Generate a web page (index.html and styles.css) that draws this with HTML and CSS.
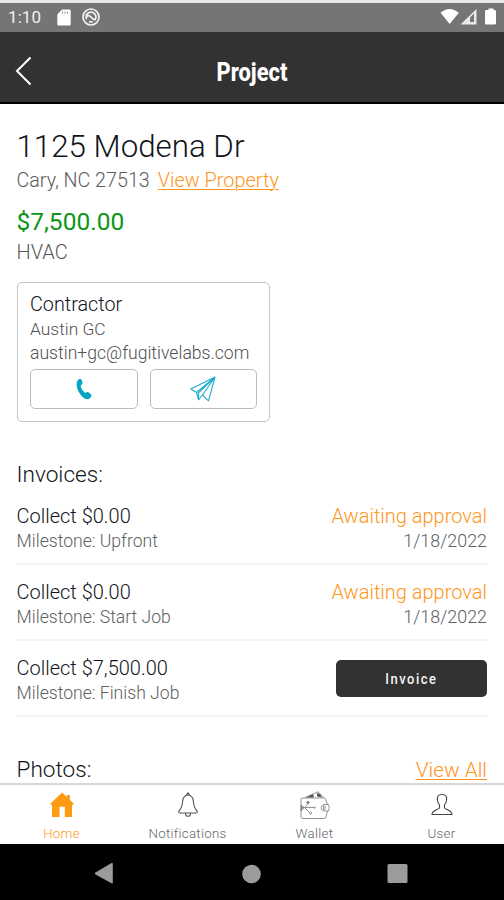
FILE: index.html
```html
<!DOCTYPE html>
<html lang="en">
<head>
<meta charset="utf-8">
<title>Project</title>
<link rel="stylesheet" href="styles.css">
</head>
<body>
<div class="status">
  <span class="clock">1:10</span>
  <svg class="sd" width="14" height="17" viewBox="0 0 14 17"><path d="M5 .5h7.500a1.200 1.200 0 0 1 1.200 1.200v13.600a1.200 1.200 0 0 1-1.200 1.200h-11A1.200 1.200 0 0 1 .3 15.300V5.500z" fill="#fff"/><path d="M5.500 2.500v2.300M8 2.500v2.300M10.500 2.500v2.300" stroke="#999" stroke-width="1"/></svg>
  <svg class="ring" width="18" height="18" viewBox="0 0 18 18" fill="none" stroke="#f2f2f2"><circle cx="9" cy="9" r="8" stroke-width="1.700"/><path d="M4.700 11.200A4.800 4.800 0 1 1 12.600 12.200M4.500 8.500q2.500-2 4.500.5t4.500 3M7 13.500q2 .8 3.500 0" stroke-width="1.700"/></svg>
  <svg class="signals" width="56" height="18" viewBox="0 0 56 18"><path d="M.5 4.800Q9.500-2.800 18.800 4.800L9.700 16z" fill="#fff"/><path d="M36.500 1v15.500h-16z" fill="#e9e9e9"/><path d="M30 9.500l4-4v8.500h-4z" fill="#777"/><path d="M46.500 2h2V.5h5V2h1.200q1.300 0 1.300 1.300v11.900q0 1.300-1.300 1.300h-8.400Q45 16.500 45 15.200V3.300Q45 2 46.500 2z" fill="#fff"/></svg>
</div>
<header class="header">
  <svg class="back" width="18" height="30" viewBox="0 0 18 30"><path d="M15.500 1.500 2 15l13.500 13.500" fill="none" stroke="#fff" stroke-width="2"/></svg>
  <h1 class="title">Project</h1>
</header>
<main class="content">
  <h2 class="address">1125 Modena Dr</h2>
  <p class="city"><span class="place">Cary, NC 27513</span><a class="link property">View Property</a></p>
  <p class="price">$7,500.00</p>
  <p class="trade">HVAC</p>
  <section class="card">
    <h3 class="role">Contractor</h3>
    <p class="name">Austin GC</p>
    <p class="email">austin+gc@fugitivelabs.com</p>
    <div class="actions">
      <span class="action"><svg width="16" height="22" viewBox="0 0 16 22"><path d="M1 3.500Q2.500.5 4.700.9 6.500 2.500 6.500 4.800 6.300 6.800 4.600 7.500 5.300 12 9.500 15q1.500-1.400 3.200-.6 2.300 1 2.800 3.300-.7 2.900-3.500 3.500Q8 21.300 4.800 17 .2 11 .6 5.500z" fill="#03a5c5"/></svg></span>
      <span class="action"><svg width="26" height="26" viewBox="0 0 26 26" fill="none" stroke="#20acc9" stroke-width="1.100" stroke-linejoin="round"><path d="M25 1 .8 13l5.700 3.500zM25 1 18.500 24.800l-6-5.800zM25 1 8.500 16.800v7l4-4.800M6.500 16.500l2 7.300M25 1 12.500 19"/></svg></span>
    </div>
  </section>
  <h3 class="heading">Invoices:</h3>
  <div class="invoice">
    <div><p class="amount">Collect $0.00</p><p class="detail">Milestone: Upfront</p></div>
    <div class="right"><p class="state">Awaiting approval</p><p class="detail date">1/18/2022</p></div>
  </div>
  <div class="invoice">
    <div><p class="amount">Collect $0.00</p><p class="detail">Milestone: Start Job</p></div>
    <div class="right"><p class="state">Awaiting approval</p><p class="detail date">1/18/2022</p></div>
  </div>
  <div class="invoice">
    <div><p class="amount">Collect $7,500.00</p><p class="detail">Milestone: Finish Job</p></div>
    <button class="button"><span class="button-label">Invoice</span></button>
  </div>
  <div class="photos"><h3 class="heading">Photos:</h3><a class="link all">View All</a></div>
</main>
<nav class="tabs">
  <a class="tab active"><svg width="24" height="26" viewBox="0 0 24 26"><path d="M12 .5 16.800 5V3h3v4.800l3.700 3.700v1.300H22V25h-7.200V14.800H9.500V25H2V12.800H.5v-1.300z" fill="#ff9a13"/></svg><span class="label">Home</span></a>
  <a class="tab"><svg width="22" height="26" viewBox="0 0 22 26" fill="none" stroke="#555" stroke-width="1.100"><path d="M9.200 3 11 .8 12.800 3M11 3C7 3 5.800 6.500 5.500 10c-.4 5-1.500 7-3.500 9-.7 1.500 0 2 1 2h16c1 0 1.700-.5 1-2-2-2-3.100-4-3.500-9-.3-3.500-1.500-7-5.500-7zM8.500 21.500a2.500 2.800 0 0 0 5 0"/></svg><span class="label">Notifications</span></a>
  <a class="tab"><svg width="30" height="28" viewBox="0 0 30 28" fill="none" stroke="#888" stroke-width=".9"><path d="M1 8v18q0 1.500 1.500 1.500H24q1.500 0 2-1.500l1.500-6M1 8q0-1 2-1h21q1.500 0 2 2l1.500 4.500M5 6.500 18 .8l6 5.700M28.500 13.500q1.500 3 0 6.500H24q-3-1-3-3.200t3-3.300zM1 16.500h13M5 16.500l3-4M5 17l4 4"/><path d="m6 6.500 7-3.500 1 3.500zM17 2l3 1 2 3.500-5-1z" fill="#555" stroke="none"/><circle cx="8" cy="11.500" r="1.200" fill="#777"/><circle cx="14.500" cy="16.500" r=".8"/><circle cx="10.500" cy="22" r="1.100"/><path d="M1 14v6l3-3.500zM23.500 14.500v4.500M25 14.500v4.500" fill="#888"/></svg><span class="label">Wallet</span></a>
  <a class="tab"><svg width="22" height="24" viewBox="0 0 22 24" fill="none" stroke="#444" stroke-width="1.100"><path d="M8.500 15v-3C7.200 11 6.800 9.500 6.500 7.500 5.800 3.500 7 1.500 11 1.500s5.200 2 4.500 6c-.3 2-.7 3.500-2 4.500v3c2 2.200 7.300 2 7.500 6.500H1c.2-4.500 5.500-4.300 7.500-6.500z"/></svg><span class="label">User</span></a>
</nav>
<footer class="system">
  <svg width="504" height="56" viewBox="0 0 504 56" fill="#9b9b9b"><path d="M95.500 28.500 111.500 19q1.300-.5 1.300 1v18.500q0 1.300-1.300.8L95.500 30.500q-1.500-1 0-2z"/><circle cx="251.500" cy="30" r="9.300"/><rect x="387.500" y="20" width="20" height="19" rx="1.500"/></svg>
</footer>
</body>
</html>
```
FILE: styles.css
```css
* { box-sizing: border-box; }
body { margin: 0; width: 504px; height: 900px; overflow: hidden; display: flex; flex-direction: column; background: #fff; color: #111420; font-family: Roboto, sans-serif; font-weight: 300; }
h1, h2, h3, p { margin: 0; font-weight: inherit; white-space: nowrap; }
svg { display: block; flex: none; }

.status { height: 32px; flex: none; border-top: 3px solid #e6e6e6; background: #757575; display: flex; align-items: center; padding: 0 8px 1px; color: #f0f0f0; }
.clock { font-size: 17px; font-weight: 400; width: 49px; letter-spacing: 0.1px; }
.ring { margin-left: 11px; }
.signals { margin-left: auto; }
.header { height: 72px; flex: none; background: #323232; border-bottom: 2px solid #000; display: grid; grid-template-columns: 56px 1fr 56px; align-items: center; color: #fff; }
.back { margin: 8px 0 0 15px; }
.title { margin-top: 12px; text-align: center; font-size: 25px; line-height: 30px; font-weight: 800; transform: scaleX(0.875); }

.content { flex: 1; min-height: 0; overflow: hidden; padding: 24px 17px 0 16.500px; }
.address { font-size: 31.300px; line-height: 37px; margin-bottom: 2px; }
.city { display: flex; font-size: 19.700px; line-height: 28px; color: #5c5c5c; }
.link { color: #ff951a; text-decoration: underline; text-decoration-thickness: 1px; text-underline-offset: 2px; }
.property { margin-left: 8px; font-size: 19.900px; }
.price { margin-top: 13px; font-size: 24.500px; line-height: 28px; color: #0b9618; font-weight: 400; }
.trade { margin-top: 1px; font-size: 20px; line-height: 30px; color: #555; }
.card { margin-top: 15px; width: 253.500px; height: 140px; border: 1.500px solid #c5c5c5; border-radius: 5px; padding: 9px 12px 0 12.500px; }
.role { font-size: 19.800px; line-height: 25px; }
.name, .email { font-size: 17.600px; line-height: 23px; color: #505050; }
.name { font-size: 17.400px; line-height: 25px; }
.actions { display: flex; gap: 12px; margin-top: 4px; }
.action { flex: 1; height: 40px; border: 1px solid #bcbcbc; border-radius: 5px; display: flex; align-items: center; justify-content: center; }
.heading { font-size: 22.600px; line-height: 28px; }
.card + .heading { margin-top: 39px; }
.invoice { height: 76px; border-bottom: 2px solid #f4f4f4; display: flex; justify-content: space-between; padding-top: 15px; }
.amount, .state { font-size: 20px; line-height: 24px; }
.state { color: #ff951a; }
.detail { font-size: 17.600px; line-height: 26px; color: #606060; }
.date { font-size: 17.900px; }
.right { text-align: right; }
.button { width: 151px; height: 37px; margin-top: 4px; border: 0; border-radius: 5px; background: #323232; color: #f4f4f4; font: 500 15px/20px Roboto, sans-serif; letter-spacing: 1.800px; }
.button-label { display: inline-block; transform: scaleX(0.86); }
.photos { display: flex; justify-content: space-between; margin-top: 39px; }
.all { font-size: 20.800px; line-height: 28px; }

.tabs { height: 61px; flex: none; border-top: 2px solid #d8d8d8; display: flex; background: #fff; color: #666; }
.tab { width: 127px; flex: none; display: grid; grid-template-rows: 39px 20px; justify-items: center; align-items: center; }
.tab:first-child { width: 123px; margin-right: 1px; }
.active { color: #ff951a; }
.label { font-size: 13.300px; line-height: 18px; letter-spacing: 0.300px; }
.system { height: 56px; flex: none; background: #000; }
```
